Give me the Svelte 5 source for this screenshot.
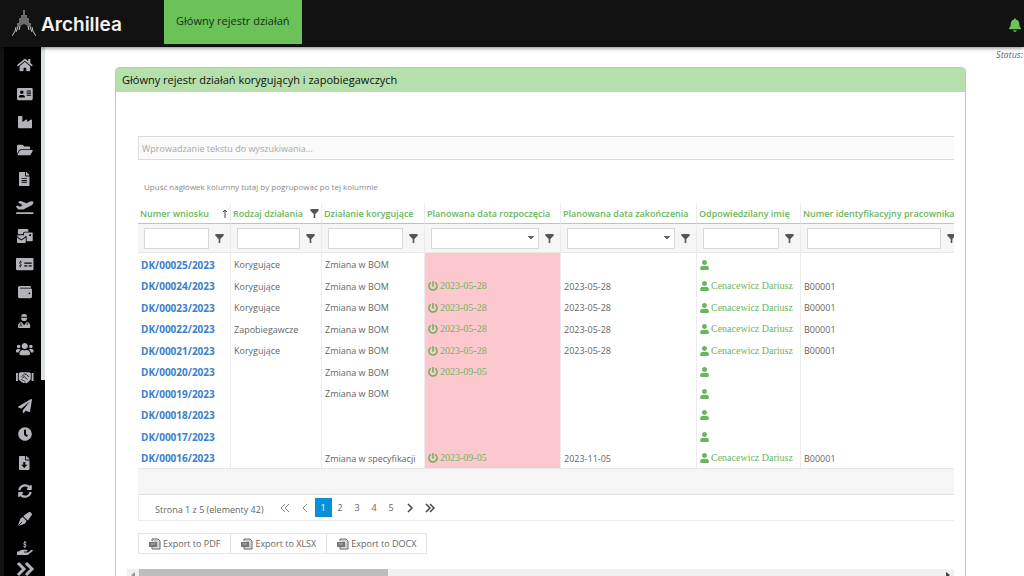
<script>
    const menu = [
        {
            label: "Start",
            w: 576,
            d: "M280.37 148.26L96 300.11V464a16 16 0 0 0 16 16l112.06-.29a16 16 0 0 0 15.92-16V368a16 16 0 0 1 16-16h64a16 16 0 0 1 16 16v95.64a16 16 0 0 0 16 16.05L464 480a16 16 0 0 0 16-16V300L295.67 148.26a12.19 12.19 0 0 0-15.3 0zM571.6 251.47L488 182.56V44.05a12 12 0 0 0-12-12h-56a12 12 0 0 0-12 12v72.61L318.47 43a48 48 0 0 0-61 0L4.34 251.47a12 12 0 0 0-1.6 16.9l25.5 31A12 12 0 0 0 45.15 301l235.22-193.74a12.19 12.19 0 0 1 15.3 0L530.9 301a12 12 0 0 0 16.9-1.6l25.5-31a12 12 0 0 0-1.7-16.93z",
        },
        {
            label: "Kontakty",
            w: 576,
            d: "M528 32H48C21 32 0 53 0 80v352c0 27 21 48 48 48h480c27 0 48-21 48-48V80c0-27-21-48-48-48zM176 128a64 64 0 1 1 0 128a64 64 0 1 1 0-128zM64 370c0-50 30-82 70-82h84c40 0 70 32 70 82v14H64zM352 128h160v40H352zM352 204h160v40H352zM352 280h160v40H352z",
        },
        {
            label: "Produkcja",
            w: 512,
            d: "M475.115 163.781L336 252.309v-68.28c0-18.916-20.931-30.399-36.885-20.248L160 252.309V56c0-13.255-10.745-24-24-24H24C10.745 32 0 42.745 0 56v400c0 13.255 10.745 24 24 24h464c13.255 0 24-10.745 24-24V184.029c0-18.917-20.931-30.399-36.885-20.248z",
        },
        {
            label: "Foldery",
            w: 576,
            d: "M572.694 292.093L500.27 416.248A63.997 63.997 0 0 1 444.989 448H45.025c-18.523 0-30.064-20.093-20.731-36.093l72.424-124.155A64 64 0 0 1 152 256h399.964c18.523 0 30.064 20.093 20.73 36.093zM152 224h328v-48c0-26.51-21.49-48-48-48H272l-64-64H48C21.49 64 0 85.49 0 112v278.046l69.077-118.418C86.214 242.25 117.989 224 152 224z",
        },
        {
            label: "Dokumenty",
            w: 384,
            d: "M224 136V0H24C10.7 0 0 10.7 0 24v464c0 13.3 10.7 24 24 24h336c13.3 0 24-10.7 24-24V160H248c-13.2 0-24-10.8-24-24zM96 224h192v36H96zM96 290h192v36H96zM96 356h192v36H96zM384 121.9v6.1H256V0h6.1c6.4 0 12.5 2.5 17 7l97.9 98c4.5 4.5 7 10.6 7 16.9z",
        },
        {
            label: "Delegacje",
            w: 640,
            d: "M624 448H16c-8.84 0-16 7.16-16 16v32c0 8.84 7.16 16 16 16h608c8.84 0 16-7.16 16-16v-32c0-8.84-7.16-16-16-16zM80.55 341.27c6.28 6.84 15.1 10.72 24.33 10.71l130.54-.18a65.62 65.62 0 0 0 29.64-7.12l290.96-147.65c26.74-13.57 50.71-32.94 67.02-58.31 18.31-28.48 20.3-49.09 13.07-63.65-7.21-14.57-24.74-25.27-58.25-27.45-29.85-1.94-59.54 5.92-86.28 19.48l-98.51 49.99-218.7-82.06a17.8 17.8 0 0 0-18-1.11L90.62 67.29c-10.67 5.41-13.25 19.65-5.17 28.53l156.22 98.1-103.21 52.38-72.35-36.47a17.8 17.8 0 0 0-16.07.02L9.91 230.22c-10.44 5.3-13.19 19.12-5.57 28.08l76.21 82.97z",
        },
        {
            label: "Poczta",
            w: 576,
            d: "M64 0h320c18 0 32 14 32 32v64H288c-35 0-64 29-64 64v32H32V32C32 14 46 0 64 0zM288 128h256c18 0 32 14 32 32v256c0 18-14 32-32 32H352V288c0-35-29-64-64-64h-32v-64c0-18 14-32 32-32zM448 192v64h64v-64zM0 308l130 95q30 20 60 0l130-95v172c0 18-14 32-32 32H32c-18 0-32-14-32-32zM32 224h256c18 0 32 14 32 32v10L185 365q-25 18-50 0L0 266v-10c0-18 14-32 32-32z",
        },
        {
            label: "Płatności",
            w: 640,
            d: "M32 32h576c18 0 32 14 32 32v384c0 18-14 32-32 32H32c-18 0-32-14-32-32V64c0-18 14-32 32-32zM304 200h272v44H304zM304 304h112v44H304zM464 304h112v44H464z",
            cut: "M212 196c-60-36-108 14-72 46l44 26c40 34-16 84-74 42M162 136v48M162 328v48",
        },
        {
            label: "Portfel",
            w: 512,
            d: "M461.2 128H80c-8.84 0-16-7.16-16-16s7.16-16 16-16h384c8.84 0 16-7.16 16-16 0-26.51-21.49-48-48-48H64C28.65 32 0 60.65 0 96v320c0 35.35 28.65 64 64 64h397.2c28.02 0 50.8-21.53 50.8-48V176c0-26.47-22.78-48-50.8-48zM416 336c-17.67 0-32-14.33-32-32s14.33-32 32-32 32 14.33 32 32-14.33 32-32 32z",
        },
        {
            label: "Pracownik",
            w: 448,
            d: "M116 96L130 28Q224-28 318 28L332 96zM112 134h224a112 124 0 0 1-224 0zM134 296l90 120 90-120c74 4 134 66 134 142v26c0 27-21 48-48 48H48c-27 0-48-21-48-48v-26c0-76 60-138 134-142z",
            cut: "M104 316v70M66 456v-30q38-60 76 0v30M338 316v90",
        },
        {
            label: "Zespół",
            w: 640,
            d: "M96 224c35.3 0 64-28.7 64-64s-28.7-64-64-64-64 28.7-64 64 28.7 64 64 64zm448 0c35.3 0 64-28.7 64-64s-28.7-64-64-64-64 28.7-64 64 28.7 64 64 64zm32 32h-64c-17.6 0-33.5 7.1-45.1 18.6 40.3 22.1 68.9 62 75.1 109.4h66c17.7 0 32-14.3 32-32v-32c0-35.3-28.7-64-64-64zm-256 0c61.9 0 112-50.1 112-112S381.9 32 320 32 208 82.1 208 144s50.1 112 112 112zm76.8 32h-8.3c-20.8 10-43.9 16-68.5 16s-47.6-6-68.5-16h-8.3C179.6 288 128 339.6 128 403.2V432c0 26.5 21.5 48 48 48h288c26.5 0 48-21.5 48-48v-28.8c0-63.6-51.6-115.2-115.2-115.2zm-223.7-13.4C161.5 263.1 145.6 256 128 256H64c-35.3 0-64 28.7-64 64v32c0 17.7 14.3 32 32 32h65.9c6.3-47.4 34.9-87.3 75.2-109.4z",
        },
        {
            label: "Kontrahenci",
            w: 640,
            d: "M0 112h68v288H0zM572 112h68v288h-68zM100 120l56-40h328l56 40v230l-88 92-68 38-60-12-60 10-84-62-80-62z",
            cut: "M200 250l108-104 72 12 84 96M240 290l66-52 104 108M250 390l-60-60M330 430l-56-56",
        },
        {
            label: "Wysyłka",
            w: 512,
            d: "M476 3.2L12.5 270.6c-18.1 10.4-15.8 35.6 2.2 43.2L121 358.4l287.3-253.2c5.5-4.9 13.3 2.6 8.6 8.3L176 407v80.5c0 23.6 28.5 32.9 42.5 15.8L282 426l124.6 52.2c14.2 6 30.4-2.9 33-18.2l72-432C515 7.8 493.3-6.8 476 3.2z",
        },
        {
            label: "Czas pracy",
            w: 512,
            d: "M256 8C119 8 8 119 8 256s111 248 248 248 248-111 248-248S393 8 256 8zm57.1 350.1L224.9 294c-3.1-2.3-4.9-5.9-4.9-9.7V116c0-6.6 5.4-12 12-12h48c6.6 0 12 5.4 12 12v137.7l63.5 46.2c5.4 3.9 6.5 11.4 2.6 16.8l-28.2 38.8c-3.9 5.3-11.4 6.5-16.8 2.6z",
        },
        {
            label: "Pobieranie",
            w: 384,
            d: "M224 136V0H24C10.7 0 0 10.7 0 24v464c0 13.3 10.7 24 24 24h336c13.3 0 24-10.7 24-24V160H248c-13.2 0-24-10.8-24-24zM156 220h72v100h80L192 436 76 320h80zM384 121.9v6.1H256V0h6.1c6.4 0 12.5 2.5 17 7l97.9 98c4.5 4.5 7 10.6 7 16.9z",
        },
        {
            label: "Synchronizacja",
            w: 512,
            d: "M370.72 133.28C339.458 104.008 298.888 87.962 255.848 88c-77.458.068-144.328 53.178-162.791 126.85-1.344 5.363-6.122 9.15-11.651 9.15H24.103c-7.498 0-13.194-6.807-11.807-14.176C33.933 94.924 134.813 8 256 8c66.448 0 126.791 26.136 171.315 68.685L463.03 40.97C478.149 25.851 504 36.559 504 57.941V192c0 13.255-10.745 24-24 24H345.941c-21.382 0-32.09-25.851-16.971-40.971l41.75-41.749zM32 296h134.059c21.382 0 32.09 25.851 16.971 40.971l-41.75 41.75c31.262 29.273 71.835 45.319 114.876 45.28 77.418-.07 144.315-53.144 162.787-126.849 1.344-5.363 6.122-9.15 11.651-9.15h57.304c7.498 0 13.194 6.807 11.807 14.176C478.067 417.076 377.187 504 256 504c-66.448 0-126.791-26.136-171.315-68.685L48.97 471.03C33.851 486.149 8 475.441 8 454.059V320c0-13.255 10.745-24 24-24z",
        },
        {
            label: "Podpisy",
            w: 512,
            d: "M214 130L376 14c40-24 84-16 108 12 28 32 32 70 8 106L376 292c-10 14-28 16-40 4L210 170c-12-12-10-30 4-40zM176 186l140 140-64 100L24 504 4 484 84 250z",
            cut: "M20 492l126-126",
        },
        {
            label: "Rozliczenia",
            w: 576,
            d: "M565.3 328.1c-11.8-10.7-30.2-10-42.6 0L430.3 402c-11.3 9.1-25.4 14-40 14H272c-8.8 0-16-7.2-16-16s7.2-16 16-16h78.3c15.9 0 30.7-10.9 33.3-26.6 3.3-20-12.1-37.4-31.6-37.4H192c-27 0-53.1 9.3-74.1 26.3L71.4 384H16c-8.8 0-16 7.2-16 16v96c0 8.8 7.2 16 16 16h356.8c14.5 0 28.6-4.9 40-14L564 377c15.2-12.1 16.4-35.3 1.3-48.9z",
            line: "M340 72c-60-36-112 14-76 44l50 24c42 30-16 82-78 44M288 4v48M288 208v48",
        },
    ];

    const funnel = "M0 0h10v2L6 6v5H4V6L0 2z";
    const user =
        "M224 256c70.7 0 128-57.3 128-128S294.7 0 224 0 96 57.3 96 128s57.3 128 128 128zm89.6 32h-16.7c-22.2 10.2-46.9 16-72.9 16s-50.6-5.8-72.9-16h-16.7C60.2 288 0 348.2 0 422.4V464c0 26.5 21.5 48 48 48h352c26.5 0 48-21.5 48-48v-41.6c0-74.2-60.2-134.4-134.4-134.4z";
    const power =
        "M400 54.1c63 45 104 118.6 104 201.9 0 136.8-110.8 247.7-247.5 248C120 504.3 8.2 393 8 256.4 7.9 173.1 48.9 99.3 111.8 54.2c11.7-8.3 28-4.8 35 7.7L162.6 90c5.9 10.5 3.1 23.8-6.6 31-41.5 30.8-68 79.6-68 134.9-.1 92.3 74.5 168.1 168 168.1 91.6 0 168.6-74.2 168-169.1-.3-51.8-24.7-101.8-68.1-134-9.7-7.2-12.4-20.5-6.5-30.9l15.8-28.1c7-12.4 23.2-16.1 34.8-7.8zM296 264V24c0-13.3-10.7-24-24-24h-32c-13.3 0-24 10.7-24 24v240c0 13.3 10.7 24 24 24h32c13.3 0 24-10.7 24-24z";

    const columns = [
        { name: "Numer wniosku", cls: "c-number", sort: true },
        { name: "Rodzaj działania", cls: "c-kind", filtered: true },
        { name: "Działanie korygujące", cls: "c-action" },
        { name: "Planowana data rozpoczęcia", cls: "c-start", date: true },
        { name: "Planowana data zakończenia", cls: "c-end", date: true },
        { name: "Odpowiedzilany imię", cls: "c-person" },
        { name: "Numer identyfikacyjny pracownika", cls: "c-id" },
    ];

    const person = "Cenacewicz Dariusz";
    const rows = [
        { nr: "DK/00025/2023", kind: "Korygujące", action: "Zmiana w BOM" },
        { nr: "DK/00024/2023", kind: "Korygujące", action: "Zmiana w BOM", start: "2023-05-28", end: "2023-05-28", person, id: "B00001" },
        { nr: "DK/00023/2023", kind: "Korygujące", action: "Zmiana w BOM", start: "2023-05-28", end: "2023-05-28", person, id: "B00001" },
        { nr: "DK/00022/2023", kind: "Zapobiegawcze", action: "Zmiana w BOM", start: "2023-05-28", end: "2023-05-28", person, id: "B00001" },
        { nr: "DK/00021/2023", kind: "Korygujące", action: "Zmiana w BOM", start: "2023-05-28", end: "2023-05-28", person, id: "B00001" },
        { nr: "DK/00020/2023", action: "Zmiana w BOM", start: "2023-09-05" },
        { nr: "DK/00019/2023", action: "Zmiana w BOM" },
        { nr: "DK/00018/2023" },
        { nr: "DK/00017/2023" },
        { nr: "DK/00016/2023", action: "Zmiana w specyfikacji", start: "2023-09-05", end: "2023-11-05", person, id: "B00001" },
    ];

    let page = 1;
    let search = "";
</script>

<div class="app">
    <header>
        <a class="logo" href="/">
            <svg viewBox="0 0 24 27" width="24" height="27" aria-hidden="true">
                <path d="M12 0v14M10 5v10M14 5v10M8 8v8l-1 4M16 8v8l1 4M6 13v4l-2 5M18 13v4l2 5M4 17q0 4-4 9M20 17q0 4 4 9" />
            </svg>
            <span>Archillea</span>
        </a>
        <a class="tab" href="#rejestr">Główny rejestr działań</a>
        <button class="bell" aria-label="Powiadomienia">
            <svg viewBox="0 0 448 512" width="12" height="14">
                <path d="M224 512c35.32 0 63.97-28.65 63.97-64H160.03c0 35.35 28.65 64 63.97 64zm215.39-149.71c-19.32-20.76-55.47-51.99-55.47-154.29 0-77.7-54.48-139.9-127.94-155.16V32c0-17.67-14.32-32-31.98-32s-31.98 14.33-31.98 32v20.84C118.56 68.1 64.08 130.3 64.08 208c0 102.3-36.15 133.53-55.47 154.29-6 6.45-8.66 14.16-8.61 21.71.11 16.4 12.98 32 32.1 32h383.8c19.12 0 32-15.6 32.1-32 .05-7.55-2.61-15.27-8.61-21.71z" />
            </svg>
        </button>
    </header>

    <div class="body">
        <nav>
            <div class="icons">
                {#each menu as item}
                    <a href="#menu" aria-label={item.label}>
                        <svg viewBox="0 0 {item.w} 512" height="14">
                            <path fill-rule="evenodd" d={item.d} />
                            {#if item.cut}<path class="cut" d={item.cut} />{/if}
                            {#if item.line}<path class="line" d={item.line} />{/if}
                        </svg>
                    </a>
                {/each}
                <button aria-label="Rozwiń menu">
                    <svg viewBox="0 0 18 14" width="18" height="14"><path class="chevrons" d="M2 1l6 6-6 6M10 1l6 6-6 6" /></svg>
                </button>
            </div>
            <div class="rail"><div class="rail-thumb"></div></div>
        </nav>

        <main>
            <p class="status">Status:</p>
            <section class="panel">
                <h1>Główny rejestr działań korygującyh i zapobiegawczych</h1>
                <div class="content">
                    <input class="search" type="text" aria-label="Szukaj" placeholder="Wprowadzanie tekstu do wyszukiwania..." bind:value={search} />
                    <p class="hint">Upuść nagłówek kolumny tutaj by pogrupować po tej kolumnie</p>

                    <div class="grid">
                        <table>
                            <colgroup>
                                {#each columns as col}<col class={col.cls} />{/each}
                            </colgroup>
                            <thead>
                                <tr class="names">
                                    {#each columns as col}
                                        <th scope="col">
                                            <div class="name">
                                                <span>{col.name}</span>
                                                {#if col.sort}
                                                    <svg class="sort" viewBox="0 0 6 9" width="6" height="9"><path d="M3 9V1M1 3l2-2 2 2" /></svg>
                                                {/if}
                                                {#if col.filtered}
                                                    <svg viewBox="0 0 10 11" width="9" height="9"><path d={funnel} /></svg>
                                                {/if}
                                            </div>
                                        </th>
                                    {/each}
                                </tr>
                                <tr class="filters">
                                    {#each columns as col}
                                        <td>
                                            <div class="filter">
                                                {#if col.date}
                                                    <select aria-label={col.name}><option></option></select>
                                                {:else}
                                                    <input type="text" aria-label={col.name} />
                                                {/if}
                                                <button aria-label="Filtr: {col.name}">
                                                    <svg viewBox="0 0 10 11" width="9" height="9"><path d={funnel} /></svg>
                                                </button>
                                            </div>
                                        </td>
                                    {/each}
                                </tr>
                            </thead>
                            <tbody>
                                {#each rows as row}
                                    <tr>
                                        <td><a href="#{row.nr}">{row.nr}</a></td>
                                        <td>{row.kind ?? ""}</td>
                                        <td>{row.action ?? ""}</td>
                                        <td class="late">
                                            {#if row.start}
                                                <span class="mark"><svg viewBox="0 0 512 512" width="10" height="10"><path d={power} /></svg>{row.start}</span>
                                            {/if}
                                        </td>
                                        <td>{row.end ?? ""}</td>
                                        <td>
                                            <span class="mark"><svg viewBox="0 0 448 512" width="9" height="10"><path d={user} /></svg>{row.person ?? ""}</span>
                                        </td>
                                        <td>{row.id ?? ""}</td>
                                    </tr>
                                {/each}
                            </tbody>
                        </table>
                        <div class="summary"></div>
                    </div>

                    <div class="pager">
                        <span class="info">Strona 1 z 5 (elementy 42)</span>
                        <button class="arrow" aria-label="Pierwsza strona" disabled>
                            <svg viewBox="0 0 10 10" width="10" height="10"><path d="M5 1L1 5l4 4M9 1L5 5l4 4" /></svg>
                        </button>
                        <button class="arrow" aria-label="Poprzednia strona" disabled>
                            <svg viewBox="0 0 6 10" width="6" height="10"><path d="M5 1L1 5l4 4" /></svg>
                        </button>
                        {#each [1, 2, 3, 4, 5] as n}
                            <button class:current={page === n} on:click={() => (page = n)}>{n}</button>
                        {/each}
                        <button class="arrow" aria-label="Następna strona">
                            <svg viewBox="0 0 6 10" width="6" height="10"><path d="M1 1l4 4-4 4" /></svg>
                        </button>
                        <button class="arrow" aria-label="Ostatnia strona">
                            <svg viewBox="0 0 10 10" width="10" height="10"><path d="M1 1l4 4-4 4M5 1l4 4-4 4" /></svg>
                        </button>
                    </div>

                    <div class="exports">
                        {#each ["PDF", "XLSX", "DOCX"] as format}
                            <button>
                                <svg viewBox="0 0 12 12" width="12" height="12" aria-hidden="true">
                                    <path class="sheet" d="M3 3V1h6l2 2v8H3V9" />
                                    <path d="M0 4h8v5H0z" />
                                    <path class="slot" d="M2 6h4M5 3h4M9 5v4" />
                                </svg>
                                Export to {format}
                            </button>
                        {/each}
                    </div>
                </div>

                <div class="scrollbar">
                    <button aria-label="Przewiń w lewo"><svg viewBox="0 0 4 6" width="4" height="6"><path d="M4 0v6L0 3z" /></svg></button>
                    <div class="track"><div class="thumb"></div></div>
                    <button class="on" aria-label="Przewiń w prawo"><svg viewBox="0 0 4 6" width="4" height="6"><path d="M0 0v6l4-3z" /></svg></button>
                </div>
            </section>
        </main>
    </div>
</div>

<style>
    :global(body) {
        background: #fff;
        overflow: hidden;
    }

    .app {
        display: flex;
        flex-direction: column;
        height: 100vh;
        overflow: hidden;
        font-family: "Open Sans", "Noto Sans", sans-serif;
        font-size: 9px;
        color: #666;
    }

    button {
        display: flex;
        align-items: center;
        justify-content: center;
        padding: 0;
        border: 0;
        background: none;
        font: inherit;
        color: inherit;
    }

    a {
        text-decoration: none;
    }

    p,
    h1 {
        margin: 0;
    }

    header {
        display: flex;
        align-items: flex-start;
        flex: none;
        height: 47px;
        background: #121212;
        box-shadow: 0 1px 4px rgba(0, 0, 0, 0.5);
        position: relative;
        z-index: 1;
    }

    .logo {
        display: flex;
        align-items: center;
        gap: 5px;
        box-sizing: border-box;
        width: 164px;
        height: 47px;
        padding-left: 12px;
        font-family: Inter, sans-serif;
        font-size: 19px;
        font-weight: 600;
        color: #f4f4f4;
    }

    .logo span {
        padding-top: 2px;
    }

    .logo path {
        fill: none;
        stroke: #c4c4c4;
        stroke-width: 1;
    }

    .tab {
        height: 44px;
        padding: 0 12px;
        background: #6ac259;
        font-size: 11px;
        line-height: 42px;
        color: #17301a;
    }

    .bell {
        margin: 18px 3px 0 auto;
        fill: #6ac259;
    }

    .body {
        display: flex;
        flex: 1;
        min-height: 0;
    }

    nav {
        display: flex;
        box-sizing: border-box;
        width: 45px;
        border-left: 4px solid #121212;
        background: #000;
    }

    .icons {
        display: flex;
        flex-direction: column;
        flex: 1;
        padding: 4px 0 0 4px;
    }

    .icons a {
        display: flex;
        align-items: center;
        justify-content: center;
        flex: 1;
        min-height: 0;
    }

    .icons svg {
        overflow: visible;
        fill: #b4b3ba;
    }

    .icons .cut {
        fill: none;
        stroke: #000;
        stroke-width: 30;
    }

    .icons .line {
        fill: none;
        stroke: #b4b3ba;
        stroke-width: 40;
    }

    .icons .chevrons {
        fill: none;
        stroke: #b4b3ba;
        stroke-width: 3;
    }

    .rail {
        width: 4px;
    }

    .rail-thumb {
        height: 63%;
        background: #dde2e5;
    }

    main {
        flex: 1;
        min-width: 0;
    }

    .status {
        height: 20px;
        padding: 0 1px;
        text-align: right;
        font-style: italic;
        line-height: 16px;
    }

    .panel {
        margin: 0 58px 0 70px;
        border: 1px solid #a5d89a;
        border-radius: 4px 4px 0 0;
        min-height: 600px;
    }

    h1 {
        padding: 0 6px;
        border-radius: 3px 3px 0 0;
        background: #b5dfab;
        font-size: 11px;
        font-weight: 400;
        line-height: 24px;
        color: #111;
    }

    .content {
        margin: 44px 11px 0 22px;
    }

    .search {
        display: block;
        box-sizing: border-box;
        width: 100%;
        height: 24px;
        padding: 0 3px;
        border: 1px solid #ddd;
        border-right: 0;
        background: #fafafa;
        font: inherit;
    }

    .search::placeholder {
        color: #a9a9a9;
    }

    .hint {
        padding: 16px 6px 6px;
        font-size: 8px;
        line-height: 22px;
        color: #888;
    }

    .grid {
        overflow: hidden;
    }

    table {
        width: 100%;
        min-width: 825px;
        table-layout: fixed;
        border-collapse: separate;
        border-spacing: 0;
    }

    .c-number {
        width: 93px;
    }

    .c-kind {
        width: 91px;
    }

    .c-action {
        width: 103px;
    }

    .c-start,
    .c-end {
        width: 136px;
    }

    .c-person {
        width: 104px;
    }

    th,
    td {
        box-sizing: border-box;
        padding: 0 3px;
        border-right: 1px solid #ececec;
        text-align: left;
        white-space: nowrap;
    }

    th {
        height: 20px;
        padding: 0 2px;
        border-bottom: 1px solid #a5d89a;
        font-weight: 600;
        color: #6ab65e;
    }

    .name,
    .filter {
        display: flex;
        align-items: center;
        justify-content: space-between;
    }

    .name svg,
    .filter svg {
        flex: none;
        fill: #555;
    }

    .name .sort {
        fill: none;
        stroke: #444;
    }

    .filters td {
        height: 29px;
        padding: 0 6px;
        border-bottom: 1px solid #e8e8e8;
        background: #f6f6f6;
    }

    .filter {
        gap: 6px;
    }

    .filter button {
        flex: none;
    }

    .filter input,
    .filter select {
        flex: 1;
        min-width: 0;
        box-sizing: border-box;
        height: 21px;
        border: 1px solid #d8d8d8;
        border-radius: 0;
        background: #fff;
    }

    .filter select {
        appearance: none;
        background: linear-gradient(to bottom right, #666 50%, transparent 50%) right 4px center / 3px 4px no-repeat,
            linear-gradient(to bottom left, #666 50%, transparent 50%) right 7px center / 3px 4px no-repeat, #fff;
    }

    tbody tr {
        height: 22px;
    }

    tbody tr:nth-child(even) {
        height: 21px;
    }

    tbody td {
        padding-top: 1px;
    }

    tbody a {
        font-size: 10px;
        font-weight: 700;
        color: #3a80ca;
    }

    .late {
        background: #fdc8cd;
    }

    .mark {
        display: flex;
        align-items: center;
        gap: 2px;
        font-family: "Liberation Serif", serif;
        font-size: 10px;
        line-height: 12px;
        color: #6ab65e;
        fill: #6ab65e;
    }

    .summary {
        height: 25px;
        border-top: 1px solid #e8e8e8;
        border-bottom: 1px solid #e0e0e0;
        background: #f5f5f5;
    }

    .pager {
        display: flex;
        align-items: center;
        height: 25px;
        border: 1px solid #ececec;
        border-top: 0;
        border-right: 0;
    }

    .info {
        margin: 3px 11px 0 16px;
    }

    .pager button {
        width: 17px;
        height: 19px;
    }

    .pager .arrow {
        width: 20px;
    }

    .pager .current {
        background: #0b8fd6;
        color: #fff;
    }

    .arrow path {
        fill: none;
        stroke: #444;
        stroke-width: 1.5;
    }

    .arrow:disabled path {
        stroke: #888;
        stroke-width: 1;
    }

    .exports {
        display: flex;
        margin-top: 12px;
    }

    .exports button {
        gap: 2px;
        height: 21px;
        margin-right: -1px;
        padding: 0 10px;
        border: 1px solid #e4e4e4;
    }

    .exports svg {
        fill: #777;
    }

    .sheet {
        fill: #ddd;
        stroke: #666;
    }

    .slot {
        fill: none;
        stroke: #bbb;
    }

    .scrollbar {
        display: flex;
        height: 12px;
        margin: 15px 11px 0;
        background: #f0f0f0;
    }

    .scrollbar button {
        width: 12px;
        fill: #999;
    }

    .scrollbar .on {
        fill: #444;
    }

    .track {
        flex: 1;
    }

    .thumb {
        width: 31%;
        height: 100%;
        background: #bdbdbd;
    }
</style>
